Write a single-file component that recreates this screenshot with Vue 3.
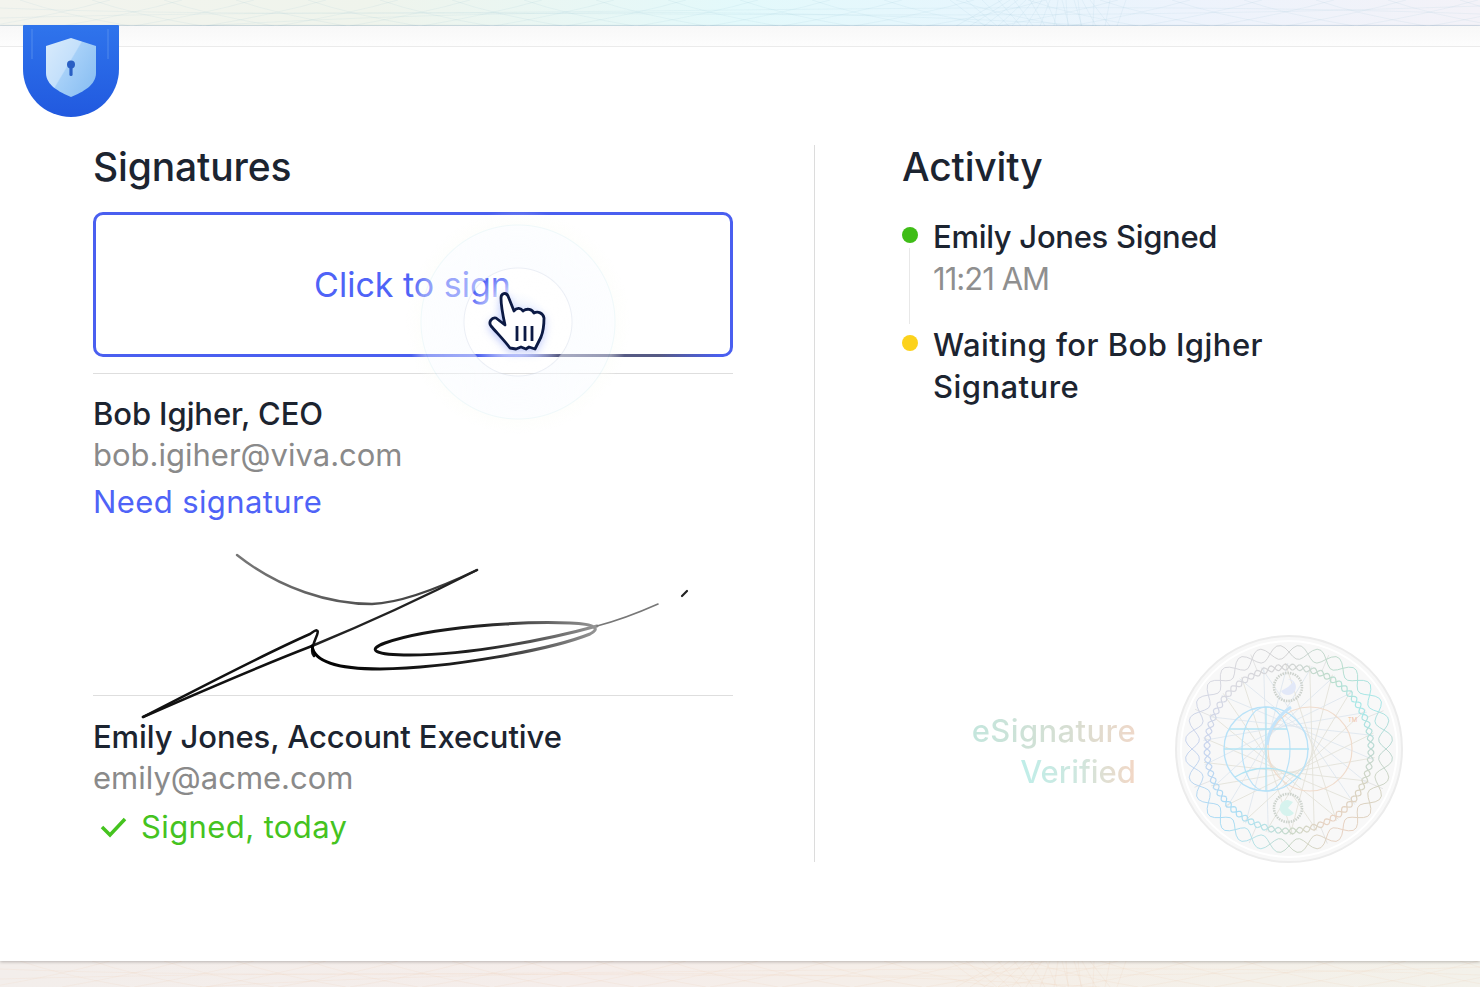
<template>
  <div class="page">
    <div class="band band-top">
      <svg class="band-lines" width="1480" height="26" viewBox="0 0 1480 26" fill="none">
        <path v-for="(d, i) in bandLines" :key="i" :d="d" stroke="#7fb4c8" stroke-opacity="0.09" />
      </svg>
    </div>

    <div class="card">
      <div class="card-top"></div>

      <div class="badge">
        <svg width="96" height="92" viewBox="0 0 96 92">
          <defs>
            <linearGradient id="shieldFill" x1="0" y1="0" x2="1" y2="0.7">
              <stop offset="0" stop-color="#d9ebfb" />
              <stop offset="0.5" stop-color="#c4e0fb" />
              <stop offset="0.52" stop-color="#a6d0f8" />
              <stop offset="1" stop-color="#8cc0f3" />
            </linearGradient>
            <linearGradient id="badgeFill" x1="0" y1="0" x2="0" y2="1">
              <stop offset="0" stop-color="#2f74ec" />
              <stop offset="1" stop-color="#2159df" />
            </linearGradient>
          </defs>
          <path d="M1 0H95Q96 0 96 1V44A48 48 0 0 1 0 44V1Q0 0 1 0Z" fill="url(#badgeFill)" />
          <path d="M9 4V34M85 4V34" stroke="#5b93ef" stroke-width="2" opacity="0.4" />
          <path d="M48 13L73 21V48C73 60 60 67 48 72C36 67 23 60 23 48V21Z" fill="url(#shieldFill)" />
          <circle cx="48" cy="39.500" r="4" fill="#2a5fc4" />
          <rect x="46.400" y="41" width="3.200" height="10" rx="1.500" fill="#2a5fc4" />
        </svg>
      </div>

      <div class="columns">
        <section class="signatures">
          <h2>Signatures</h2>
          <div class="sign-box">
            <span class="sign-text">Click to sign</span>
            <span class="sign-border-tint"></span>
          </div>

          <div class="signer signer-first">
            <div class="name">Bob Igjher, CEO</div>
            <div class="email">bob.igiher@viva.com</div>
            <div class="status status-need">Need signature</div>
          </div>

          <div class="signature-slot">
            <svg class="signature" width="560" height="180" viewBox="0 0 560 180" fill="none" stroke-linecap="round">
              <defs>
                <linearGradient id="inkTop" x1="0" y1="0" x2="1" y2="0">
                  <stop offset="0" stop-color="#777" />
                  <stop offset="1" stop-color="#333" />
                </linearGradient>
                <linearGradient id="inkLoop" gradientUnits="userSpaceOnUse" x1="160" y1="0" x2="450" y2="0">
                  <stop offset="0" stop-color="#000" />
                  <stop offset="0.6" stop-color="#222" />
                  <stop offset="1" stop-color="#999" />
                </linearGradient>
              </defs>
              <path d="M87 13C130 47 180 62 222 62C250 61 285 48 327 28" stroke="url(#inkTop)" stroke-width="2.400" />
              <path d="M327 28C280 52 225 78 162 104" stroke="#222" stroke-width="2.500" />
              <path d="M-7 175C50 146 110 114 160 92C167 87 169 87 167 93C163 103 160 110 164 114" stroke="#111" stroke-width="2.500" />
              <path d="M-7 175C50 150 110 124 162 104" stroke="#111" stroke-width="2.500" />
              <path d="M162 104C164 120 190 127 230 127C300 126 400 108 440 92C450 87 447 82 420 81C370 79 280 85 235 101C216 108 225 113 260 113C320 113 400 97 447 84" stroke="url(#inkLoop)" stroke-width="3" />
              <path d="M447 84C470 78 490 70 508 62" stroke="#777" stroke-width="1.600" />
              <path d="M532 54L537 49" stroke="#222" stroke-width="2.200" />
            </svg>
          </div>

          <div class="signer">
            <div class="name">Emily Jones, Account Executive</div>
            <div class="email">emily@acme.com</div>
            <div class="status status-signed">
              <svg width="30" height="26" viewBox="0 0 30 26" fill="none" stroke="#45c31f" stroke-width="3.500">
                <path d="M3 13L11 21L26 5" />
              </svg>
              Signed, today
            </div>
          </div>
        </section>

        <section class="activity">
          <h2>Activity</h2>
          <ul class="timeline">
            <li class="event event-done">
              <div class="event-title">Emily Jones Signed</div>
              <div class="event-time">11:21 AM</div>
            </li>
            <li class="event event-wait">
              <div class="event-title">Waiting for Bob Igjher<br />Signature</div>
            </li>
          </ul>

          <div class="verified">
            <div class="verified-text">
              <span class="v-one">eSignature</span>
              <span class="v-two">Verified</span>
            </div>
            <svg class="seal" width="232" height="232" viewBox="-116 -116 232 232" fill="none">
              <circle r="113" fill="#f8f8f8" stroke="#ececec" stroke-width="2" />
              <circle r="108" stroke="#ffffff" stroke-width="2" />
              <path v-for="(s, i) in chords" :key="'s' + i" :d="s.d" :stroke="s.c" stroke-width="0.900" />
              <path v-for="(s, i) in outerRope" :key="'o' + i" :d="s.d" :stroke="s.c" stroke-width="1" />
              <path v-for="(s, i) in innerRope" :key="'n' + i" :d="s.d" :stroke="s.c" stroke-width="1.200" />
              <circle cx="21" cy="0" r="42" stroke="#f0dccd" stroke-width="1.200" />
              <circle cx="-23" cy="0" r="42" stroke="#b9e2f8" stroke-width="1.400" />
              <ellipse cx="-23" cy="0" rx="24" ry="42" stroke="#b9e2f8" stroke-width="1.200" />
              <path d="M-23 -42V42M-65 0H20M-60 -20H-2M-54 28C-35 16 -10 16 12 30" stroke="#b2e4f3" stroke-width="1.300" />
              <path d="M-22 -4C-20 -22 -10 -34 2 -42" stroke="#c4e4fa" stroke-width="3" />
              <circle cx="-1" cy="-62" r="14" stroke="#cdd2cd" stroke-width="2.600" stroke-dasharray="1.500 1" />
              <path d="M-1 -70A8 8 0 1 1 -8 -58L-1 -62L4 -67Z" fill="#e2e8f8" />
              <circle cx="-1" cy="59" r="14" stroke="#cdd3cd" stroke-width="2.600" stroke-dasharray="1.500 1" />
              <path d="M-1 51A8 8 0 1 0 5 64L-1 59L4 53Z" fill="#d6f3ee" />
              <text x="59" y="-27" class="tm">TM</text>
            </svg>
          </div>
        </section>
      </div>

      <div class="halo">
        <svg class="hand" width="60" height="64" viewBox="0 0 60 64">
          <path d="M13 8C13 3 18 2 20 6L26 21C29 17 33 18 35 21C39 18 44 19 46 23C50 21 55 23 56 28C56 36 55 42 53 47L47 59L41 57L38 59L33 57L28 59L22 58C16 50 8 42 3 36C0 32 4 27 8 28L17 35C15 26 13 16 13 8Z" fill="#fff" stroke="#0c1a44" stroke-width="2.800" stroke-linejoin="round" />
          <path d="M29 36V51M37 36V51M44 36V51" stroke="#0c1a44" stroke-width="2.800" />
        </svg>
      </div>
    </div>

    <div class="band band-bottom">
      <svg class="band-lines" width="1480" height="26" viewBox="0 0 1480 26" fill="none">
        <path v-for="(d, i) in bandLines" :key="i" :d="d" stroke="#e8b894" stroke-opacity="0.1" />
      </svg>
    </div>
  </div>
</template>

<script setup>
// colour of the seal's rings by angle, degrees clockwise from the right
const palette = [
  [-180, [200, 212, 238]],
  [-135, [216, 216, 224]],
  [-90, [212, 212, 212]],
  [-60, [188, 220, 203]],
  [-30, [165, 232, 234]],
  [0, [188, 217, 210]],
  [30, [216, 210, 192]],
  [60, [234, 210, 194]],
  [90, [200, 216, 200]],
  [110, [181, 227, 232]],
  [135, [168, 220, 246]],
  [180, [200, 212, 238]]
]

function ringColor(rad) {
  const deg = (Math.atan2(Math.sin(rad), Math.cos(rad)) * 180) / Math.PI
  for (let i = 0; i < palette.length - 1; i++) {
    const [a, ca] = palette[i]
    const [b, cb] = palette[i + 1]
    if (deg >= a && deg <= b) {
      const t = (deg - a) / (b - a)
      return `rgb(${ca.map((v, k) => Math.round(v + (cb[k] - v) * t)).join(',')})`
    }
  }
  return 'rgb(200,212,238)'
}

// wavy rope round the seal: two sine paths in opposite phase, cut into coloured pieces
function rope(radius, amp, waves, count) {
  const pieces = []
  const pts = waves * 10
  for (const phase of [0, Math.PI]) {
    for (let p = 0; p < count; p++) {
      let d = ''
      const from = Math.floor((p / count) * pts)
      const to = Math.floor(((p + 1) / count) * pts)
      for (let i = from; i <= to; i++) {
        const a = (i / pts) * Math.PI * 2
        const r = radius + amp * Math.sin(a * waves + phase)
        d += `${i === from ? 'M' : 'L'}${(r * Math.cos(a)).toFixed(1)} ${(r * Math.sin(a)).toFixed(1)}`
      }
      pieces.push({ d, c: ringColor(((p + 0.5) / count) * Math.PI * 2) })
    }
  }
  return pieces
}

const outerRope = rope(97, 7, 16, 48)
const innerRope = rope(82, 3, 36, 48)

// star of chords inside the seal, fanning out from just right of the middle
const chords = []
for (let i = 0; i < 22; i++) {
  const a = (i / 22) * Math.PI * 2 + 0.1
  const b = a + 2.6
  const warm = Math.cos(a) > -0.2
  chords.push({
    d: `M${(86 * Math.cos(a)).toFixed(1)} ${(86 * Math.sin(a)).toFixed(1)}L${(86 * Math.cos(b)).toFixed(1)} ${(86 * Math.sin(b)).toFixed(1)}`,
    c: warm ? '#e3e2d9' : '#dfe7ee'
  })
}
for (let i = 0; i < 8; i++) {
  const a = (i / 8) * Math.PI * 2 + 0.4
  chords.push({
    d: `M${(84 * Math.cos(a)).toFixed(1)} ${(84 * Math.sin(a)).toFixed(1)}L${(102 * Math.cos(a)).toFixed(1)} ${(102 * Math.sin(a)).toFixed(1)}`,
    c: '#e2e2e2'
  })
}

// faint guilloche lines in the background bands, bunching up near x=1030
const bandLines = []
for (let i = 0; i < 22; i++) {
  const x = 20 + i * 72
  bandLines.push(`M${x} 0Q${x + 40} 14 ${x + 110} 26`)
  bandLines.push(`M${x + 90} 0Q${x + 40} 14 ${x - 30} 26`)
}
for (let i = 0; i < 12; i++) {
  bandLines.push(`M${950 + i * 16} 0L${985 + i * 12} 26`)
  bandLines.push(`M${1090 - i * 8} 0L${1110 - i * 14} 26`)
}
bandLines.push('M0 8C400 24 1000 -4 1480 14', 'M0 18C500 4 900 26 1480 6', 'M200 26C500 8 800 8 1100 26')
</script>

<style>
html,
body {
  margin: 0;
  background: #fff;
}
</style>

<style scoped>
.page {
  width: 1480px;
  height: 987px;
  display: flex;
  flex-direction: column;
  overflow: hidden;
  font-family: Inter, "Liberation Sans", sans-serif;
  color: #1c2430;
}

.band {
  position: relative;
  flex: none;
}

.band-top {
  height: 26px;
  background: linear-gradient(90deg, #f3f4ee 0%, #eff4ec 25%, #e3f9fb 50%, #e6f6fd 65%, #edf3fc 80%, #f3f2f8 100%);
  box-shadow: inset 0 -1px 0 rgba(160, 190, 215, 0.35);
}

.band-bottom {
  height: 26px;
  background: linear-gradient(90deg, #f3eeeb 0%, #f5edea 40%, #f5efe8 70%, #f3f1ea 100%);
}

.band-lines {
  display: block;
}

.card {
  position: relative;
  flex: 1;
  background: #fff;
  box-shadow: 0 1px 3px rgba(0, 0, 0, 0.25);
  z-index: 1;
}

.card-top {
  height: 20px;
  background: linear-gradient(180deg, #f8f8f8, #fdfdfd);
  border-bottom: 1px solid #ebebeb;
}

.badge {
  position: absolute;
  left: 23px;
  top: -1px;
  line-height: 0;
}

.columns {
  display: flex;
  margin: 98px 0 0 93px;
}

.signatures {
  width: 640px;
  margin-top: -1px;
}

h2 {
  margin: 0;
  font-size: 39px;
  line-height: 46px;
  font-weight: 500;
  letter-spacing: -0.15px;
}

.sign-box {
  position: relative;
  box-sizing: border-box;
  height: 145px;
  margin-top: 22px;
  border: 3px solid #4a5ff0;
  border-radius: 10px;
  display: flex;
  align-items: center;
  justify-content: center;
}

.sign-text {
  font-size: 34px;
  color: #4f63f7;
  margin-right: 1px;
}

.sign-border-tint {
  position: absolute;
  left: 420px;
  right: 10px;
  bottom: -3px;
  height: 3px;
  background: linear-gradient(90deg, rgba(85, 90, 130, 0), #565a84 20%, #565a84 70%, rgba(85, 90, 130, 0));
}

.signer {
  border-top: 1px solid #dedede;
  padding-top: 20px;
}

.signer-first {
  margin-top: 16px;
  padding-top: 19px;
}

.name {
  font-size: 31px;
  line-height: 41px;
  font-weight: 500;
  letter-spacing: -0.1px;
}

.email {
  font-size: 31px;
  line-height: 42px;
  color: #8a8a8a;
}

.status {
  font-size: 31px;
  line-height: 48px;
  margin-top: 1.5px;
  letter-spacing: 0.4px;
  display: flex;
  align-items: center;
  gap: 12px;
}

.status-need {
  color: #4f63f7;
}

.status-signed {
  color: #45c31f;
  padding-left: 6px;
  margin-top: 3.5px;
}

.signature-slot {
  position: relative;
  height: 169.5px;
}

.signature {
  position: absolute;
  left: 57px;
  top: 16px;
  overflow: visible;
  z-index: 1;
}

.activity {
  position: relative;
  box-sizing: border-box;
  width: 666px;
  height: 717px;
  margin-left: 81px;
  padding-left: 87px;
  border-left: 1px solid #dcdcdc;
}

.activity h2 {
  margin-top: -1px;
}

.timeline {
  list-style: none;
  margin: 26px 0 0;
  padding: 0;
}

.event {
  position: relative;
  padding-left: 31px;
  font-size: 31px;
  line-height: 42px;
}

.event-title {
  font-weight: 500;
}

.event-done .event-title {
  letter-spacing: -0.3px;
}

.event-wait .event-title {
  letter-spacing: 0.45px;
}

.event-time {
  color: #8f8f8f;
  letter-spacing: -0.95px;
}

.event + .event {
  margin-top: 24px;
}

.event::before {
  content: "";
  position: absolute;
  left: 0;
  top: 11px;
  width: 16px;
  height: 16px;
  border-radius: 50%;
}

.event-done::before {
  background: #3fbd17;
}

.event-wait::before {
  background: #fcd21c;
}

.event-done::after {
  content: "";
  position: absolute;
  left: 7px;
  top: 32px;
  width: 1px;
  height: 76px;
  background: #e8e8e8;
}

.verified {
  position: absolute;
  right: 0;
  bottom: -3px;
  display: flex;
  align-items: center;
  gap: 37px;
  padding-right: 75px;
}

.verified-text {
  display: flex;
  flex-direction: column;
  align-items: flex-end;
  padding-top: 3px;
  font-size: 31px;
  line-height: 41px;
  font-weight: 500;
}

.v-one,
.v-two {
  background-clip: text;
  -webkit-background-clip: text;
  color: transparent;
}

.v-one {
  letter-spacing: 0.4px;
  background-image: linear-gradient(90deg, #c4e6dd, #d7ded2 60%, #efd8c9);
}

.v-two {
  background-image: linear-gradient(90deg, #bfeee9, #cfe7df 50%, #f3d6c4);
}

.seal {
  display: block;
}

.tm {
  font-family: Inter, sans-serif;
  font-size: 6px;
  fill: #f2c4a8;
}

.halo {
  position: absolute;
  left: 406px;
  top: 184px;
  width: 224px;
  height: 224px;
  border-radius: 50%;
  z-index: 2;
  background:
    radial-gradient(circle, rgba(222, 234, 255, 0.55) 0 10px, rgba(255, 255, 255, 0.75) 30px, rgba(247, 250, 255, 0) 53px, transparent 54px),
    radial-gradient(circle, transparent 53px, rgba(215, 222, 235, 0.5) 54px, rgba(248, 251, 255, 0.5) 55px, rgba(248, 251, 255, 0.4) 96px, rgba(215, 238, 242, 0.4) 97px, rgba(252, 253, 248, 0.4) 98px, rgba(255, 255, 255, 0) 112px);
}

.hand {
  position: absolute;
  left: 82px;
  top: 80px;
  filter: drop-shadow(0 3px 4px rgba(60, 90, 240, 0.3));
}
</style>
